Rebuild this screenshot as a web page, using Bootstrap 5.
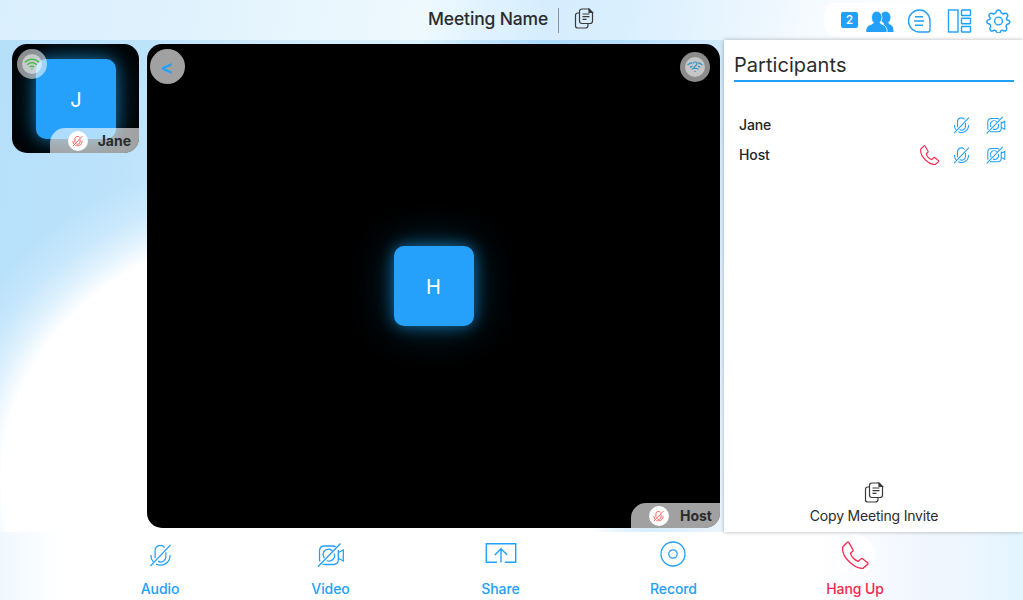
<!DOCTYPE html>
<html lang="en">
<head>
<meta charset="utf-8">
<meta name="viewport" content="width=device-width, initial-scale=1">
<title>Meeting Name</title>
<link href="https://cdn.jsdelivr.net/npm/bootstrap@5.3.0/dist/css/bootstrap.min.css" rel="stylesheet">
<style>
:root { --blue: #23a0fa; --red: #f8264f; --ink: #2b2b2b; }
body { font-family: Inter, "Liberation Sans", sans-serif; font-size: 14px; line-height: 20px; color: var(--ink);
  background:
    radial-gradient(ellipse 298px 254px at 300px 480px, #fff 100%, rgba(255,255,255,.55) 108%, rgba(255,255,255,.2) 117%, rgba(255,255,255,0) 130%),
    linear-gradient(100deg, #b5dffa 0, #bde3fb 150px, #cfebfb 290px, #ddf3fc 420px, #c4e6fc 475px, #acdafc 540px, #b4dffc 620px, #d4ebfd 730px, #ebf5fe 800px, #fff 930px); }
svg { display: block; fill: none; stroke: currentColor; flex: none; }
.blue { color: var(--blue); }
.red { color: var(--red); }
.topbar { height: 40px; background: rgba(255,255,255,.5); }
.title { font-size: 17.5px; letter-spacing: -.15px; font-weight: 500; line-height: 24px; padding-top: 7px; }
.rule { width: 1px; height: 25px; background: #8b9298; margin: 8px 15px 0 10px; }
.copy-icon { color: #3a3a3a; }
.tools { width: 199px; height: 34px; margin-top: 3px; padding-left: 17px; background: #fff; border-radius: 12px 0 0 12px; }
.count { width: 17px; height: 16px; border-radius: 2px; background: var(--blue); color: #fff; font: 500 12px/16px Inter, sans-serif; text-align: center; }
.stage { height: 492px; padding: 4px 0 0 12px; }
.tile { background: #000; border-radius: 15px; overflow: hidden; }
.thumb { width: 127px; height: 109px; }
.screen { width: 573px; height: 484px; margin-left: 8px; }
.initial { width: 80px; height: 80px; border-radius: 10px; background: #25a0fb; color: #fff; font-size: 20px; padding-top: 1px; box-shadow: 0 0 15px rgba(35,160,250,.6), 0 0 40px rgba(13,110,150,.55); }
.signal { width: 30px; height: 30px; border-radius: 50%; background: rgba(255,255,255,.55); }
.signal-in { width: 20px; height: 20px; border-radius: 50%; background: rgba(255,255,255,.5); }
.back { width: 35px; height: 35px; border-radius: 50%; background: #a1a1a1; left: 3px; top: 5px; font-size: 20px; font-weight: 600; padding: 0 2px 0 0; }
.nametag { height: 25px; background: rgba(255,255,255,.63); border-top-left-radius: 15px; font-weight: 700; right: 0; bottom: 0; padding: 0 8px 0 18px; gap: 10px; }
.mute { width: 20px; height: 20px; border-radius: 50%; background: #fff; color: #f05050; }
.panel { width: 299px; height: 492px; margin: -4px 0 0 4px; background: #fff; box-shadow: 0 0 4px rgba(0,0,0,.3); padding: 0 9px 0 10px; }
.panel-title { font-size: 20px; letter-spacing: .05px; line-height: 28px; height: 42px; padding-top: 11px; border-bottom: 2px solid var(--blue); margin-bottom: 28px; }
.person { height: 30px; padding: 0 8px 0 5px; font-weight: 500; font-size: 14px; letter-spacing: -.1px; }
.invite { letter-spacing: -.2px; margin-top: 3px; }
.footer-bar { height: 68px; background: linear-gradient(90deg, #f0f8ff 0, #fff 60px, #fff 820px, #f0f6fe 930px, #f0f6fe 955px, #e3f5ff 1023px); padding-left: 74px; }
.action { height: 68px; padding-top: 3px; font-weight: 500; letter-spacing: -.1px; }
.action-icon { width: 40px; height: 40px; border-radius: 50%; }
.action span { margin-top: 4px; }
</style>
</head>
<body class="vh-100 overflow-hidden">
<svg width="0" height="0" class="position-absolute">
  <symbol id="mic" viewBox="0 0 24 24"><path d="M6.400 15V7.400a5.500 5.500 0 0 1 9.900-3.200M17.600 9v5.400a5.300 5.300 0 0 1-8.200 4M2 12c0 3 .8 5.300 2.400 7M22 12c0 9-8.500 12.500-14.500 9.500M1.500 23.500 22.500 1.500"/></symbol>
  <symbol id="cam" viewBox="0 0 28 24"><path d="M3 18.500a5 5 0 0 1-.5-2.500V8q0-5 5-5h8q2 0 3.200.8M21.300 7v9.500q0 5-5 5H8q-1.500 0-2.500-.4M21.300 9.500l5-2.500v11l-5-2.700M7.500 15a5.200 5.200 0 0 1 7.800-7.200M17 10.500a5.300 5.300 0 0 1-7.200 7M1 23.800 23.500.5"/></symbol>
  <symbol id="phone" viewBox="0 0 28 28"><path d="M6.300 1.300 1.800 5.800c-.9 5 2.300 11 6.700 15.200s9.400 6.700 13.500 6.300l4.700-4c.5-.5.4-1-.1-1.500l-5-4c-.6-.5-1.200-.4-1.700.1l-2.800 2.500c-3-1-6.800-4.700-7.700-8l2.300-2.200c.6-.6.600-1.200.1-1.800L7.700 1.400c-.4-.5-.9-.6-1.400-.1z"/></symbol>
  <symbol id="copy" viewBox="0 0 20 21"><path d="M5.500 5H3.800Q1.500 5 1.500 7.300v10.400Q1.500 20 3.800 20h7.500Q14 20 14 17.500V16M8 1h7l3.500 4v8q0 2.500-2.500 2.500H8q-2.500 0-2.500-2.500V3.500Q5.500 1 8 1zM8.500 6h7M8.500 8.700h7M8.500 11.300h4"/><path d="M15 1v3.500h3.500z" fill="currentColor"/></symbol>
</svg>

<header class="topbar d-flex">
  <div class="d-flex" style="margin-left:428px">
    <div class="title text-nowrap">Meeting Name</div>
    <div class="rule"></div>
    <svg class="copy-icon" style="margin-top:8px" width="20" height="21" stroke-width="1.200"><use href="#copy"/></svg>
  </div>
  <div class="tools d-flex align-items-center blue ms-auto">
    <div class="count">2</div>
    <svg style="margin:2px 0 0 8px" width="28" height="21" viewBox="0 0 28 21" stroke="none"><g fill="currentColor" stroke="none"><ellipse cx="19.500" cy="6.500" rx="5" ry="6"/><path d="M18 11.500h4.500l.5 1.500q5 1.500 4.500 8H17z"/></g><path fill="currentColor" stroke="#fff" stroke-width=".8" d="M-.2 21.800q-.8-7.300 6.200-8.800l1.500-1.200a7 7 0 0 1-2-5C5.500 3 7.500.300 10.700.300s5.200 2.700 5.200 6.400a7 7 0 0 1-2 5L15.500 13q6 1.500 5.700 8.800z"/></svg>
    <svg style="margin:1px 0 0 13px" width="24" height="24" viewBox="0 0 24 24" stroke-width="1.400"><path d="M12.500 1a10.500 11 0 0 1 10.500 11v9q0 2-2 2h-8.500A11 11 0 0 1 12.500 1zM8 7.800h8M7 12h10M8 16.200h8"/></svg>
    <svg style="margin:1px 0 0 16px" width="25" height="24" viewBox="0 0 25 24" stroke-width="1.400"><rect x="1.500" y="1" width="9.500" height="22"/><rect x="14.500" y="1" width="9" height="5.500" rx=".5"/><rect x="14.500" y="9.300" width="9" height="5.500" rx=".5"/><rect x="14.500" y="17.500" width="9" height="5.500" rx=".5"/></svg>
    <svg style="margin:1px 0 0 14px" width="25" height="24" viewBox="0 0 25 24" stroke-width="1.400"><circle cx="12.500" cy="12" r="3.900"/><path d="M9.800 3.900q.7-2.900 2.700-2.900t2.700 2.900q1 .4 1.900 1.200 2.900-1.700 4.300.2 1.200 1.800-1 3.900.3 1 .3 1.500 3.100.500 3.100 2.200 0 1.900-3 2.500-.3 1.300-.9 2 1.700 2.500.2 4-1.400 1.400-3.900-.2-.9.600-1.500.8-.3 1.500-1.100 1.900h-2.200q-.8-.4-1.200-1.900-.9-.3-1.700-.8-2.500 1.600-3.900.2-1.500-1.500.2-4-.6-1-.8-2.100Q.8 14.700.8 12.800q0-1.800 3-2.400.1-.8.400-1.500-2-1.900-.9-3.600 1.400-1.900 4.200-.200 1-.8 2.300-1.200z"/></svg>
  </div>
</header>

<main class="stage d-flex">
  <section class="tile thumb position-relative">
    <div class="initial d-flex align-items-center justify-content-center" style="margin:15px 0 0 24px">J</div>
    <div class="signal position-absolute d-flex align-items-center justify-content-center" style="left:5px;top:5px">
      <div class="signal-in d-flex align-items-center justify-content-center"><svg width="16" height="12" viewBox="0 0 16 12" stroke-width="1.300" style="color:#3db83f"><path d="M.8 4.200q7.200-6 14.400 0M3.300 6.700q4.700-4 9.400 0M5.700 9.100q2.300-2 4.600 0M7.500 11h1"/></svg></div>
    </div>
    <div class="nametag position-absolute d-flex align-items-center"><span class="mute d-flex align-items-center justify-content-center"><svg width="11" height="12" viewBox="0 0 24 24" stroke-width="2"><use href="#mic"/></svg></span>Jane</div>
  </section>
  <section class="tile screen position-relative d-flex align-items-center justify-content-center">
    <div class="initial d-flex align-items-center justify-content-center">H</div>
    <div class="back blue position-absolute d-flex align-items-center justify-content-center">&lt;</div>
    <div class="signal position-absolute d-flex align-items-center justify-content-center" style="right:10px;top:8px">
      <div class="signal-in d-flex align-items-center justify-content-center"><svg width="16" height="12" viewBox="0 0 16 12" stroke-width="1.200" style="color:#3295cc"><path d="M.5 4q2-1.700 4.500-2.400M11 1.600q2.500.7 4.500 2.400M3 6.500l2.500-1.600M11 4.900l2 1.600M6 2.600Q6.300 1 8 1q2 0 2 1.600 0 1.200-2 2.900L6.300 7.500h4M4.800 8.500l1-.7M10.500 7.800l.8.700M7.300 10.500h1.400"/></svg></div>
    </div>
    <div class="nametag position-absolute d-flex align-items-center" style="padding-left:18px;gap:11px"><span class="mute d-flex align-items-center justify-content-center"><svg width="11" height="12" viewBox="0 0 24 24" stroke-width="2"><use href="#mic"/></svg></span>Host</div>
  </section>
  <aside class="panel d-flex flex-column">
    <div class="panel-title">Participants</div>
    <div class="person d-flex align-items-center blue"><span class="me-auto text-dark">Jane</span>
      <svg width="17" height="18" stroke-width="1.500"><use href="#mic"/></svg><svg style="margin-left:16px" width="20" height="18" stroke-width="1.500"><use href="#cam"/></svg></div>
    <div class="person d-flex align-items-center blue"><span class="me-auto text-dark">Host</span>
      <svg class="red" style="margin-right:13px" width="21" height="20" stroke-width="1.600"><use href="#phone"/></svg>
      <svg width="17" height="18" stroke-width="1.500"><use href="#mic"/></svg><svg style="margin-left:16px" width="20" height="18" stroke-width="1.500"><use href="#cam"/></svg></div>
    <div class="mt-auto d-flex flex-column align-items-center" style="padding-bottom:6px">
      <svg class="copy-icon" width="20" height="21" stroke-width="1.200"><use href="#copy"/></svg><div class="invite">Copy Meeting Invite</div>
    </div>
  </aside>
</main>

<footer class="footer-bar d-flex blue">
  <div class="action d-flex flex-column align-items-center" style="width:172px"><div class="action-icon d-flex align-items-center justify-content-center"><svg width="23" height="24" stroke-width="1.300"><use href="#mic"/></svg></div><span>Audio</span></div>
  <div class="action d-flex flex-column align-items-center" style="width:169px"><div class="action-icon d-flex align-items-center justify-content-center"><svg width="28" height="24" stroke-width="1.300"><use href="#cam"/></svg></div><span>Video</span></div>
  <div class="action d-flex flex-column align-items-center" style="width:171px"><div class="action-icon d-flex align-items-center justify-content-center pb-1"><svg width="32" height="22" viewBox="0 0 32 22" stroke-width="1.400"><path d="M12 20.300H1.300V1.700h29.400v18.600H20M16 20.500V7M9.800 13 16 6.800l6.200 6.200"/></svg></div><span>Share</span></div>
  <div class="action d-flex flex-column align-items-center" style="width:175px"><div class="action-icon d-flex align-items-center justify-content-center" style="padding:0 2px 2px 0"><svg width="26" height="26" viewBox="0 0 26 26" stroke-width="1.300"><circle cx="13" cy="13" r="12"/><circle cx="13" cy="13" r="4.200"/></svg></div><span>Record</span></div>
  <div class="action red d-flex flex-column align-items-center" style="width:188px"><div class="action-icon bg-white d-flex align-items-center justify-content-center"><svg width="28" height="28" stroke-width="1.300"><use href="#phone"/></svg></div><span>Hang Up</span></div>
</footer>
<script src="https://cdn.jsdelivr.net/npm/bootstrap@5.3.0/dist/js/bootstrap.bundle.min.js"></script>
</body>
</html>
